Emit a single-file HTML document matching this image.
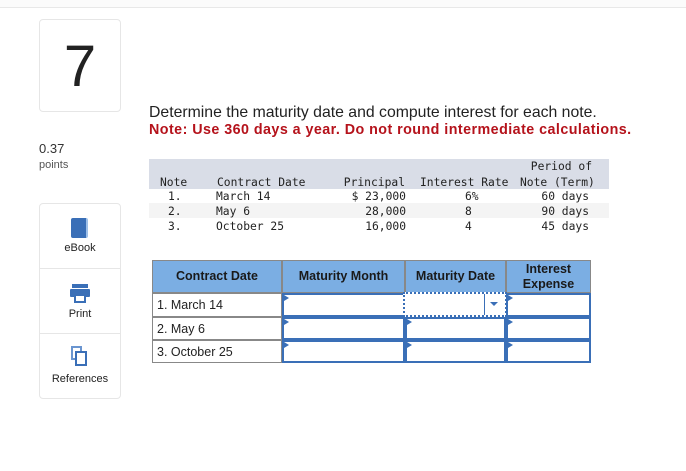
<!DOCTYPE html>
<html><head><meta charset="utf-8"><style>
*{margin:0;padding:0;box-sizing:border-box}
body{width:686px;height:471px;background:#fff;position:relative;overflow:hidden;font-family:"Liberation Sans",sans-serif;color:#222}
.abs{position:absolute}
.m{position:absolute;font-family:"DejaVu Sans Mono","Liberation Mono",monospace;font-size:11.3px;color:#222;white-space:pre;line-height:15px}
.r{text-align:right}
.cell{position:absolute;background:#fff;border:2px solid #3a6fb7}
.cell:before{content:"";position:absolute;left:0;top:0;border-left:5px solid #3a6fb7;border-top:3.5px solid transparent;border-bottom:3.5px solid transparent}
.hd{position:absolute;top:260px;height:33px;background:#7baee3;border:1px solid #888;font-weight:bold;font-size:12.5px;color:#1a1a1a;display:flex;align-items:center;justify-content:center;text-align:center;line-height:15px}
.lab{position:absolute;left:152px;width:130px;background:#fff;border:1px solid #888;font-size:12.5px;padding-left:4px;display:flex;align-items:center}
</style></head><body>
<div class="abs" style="left:0;top:0;width:686px;height:8px;background:#fbfbfb;border-bottom:1px solid #e8e8e8"></div>
<div class="abs" style="left:39px;top:19px;width:82px;height:93px;border:1px solid #e6e6e6;border-radius:4px;text-align:center;font-size:58px;line-height:93px;color:#222">7</div>
<div class="abs" style="left:39px;top:141px;font-size:13px;color:#333">0.37</div>
<div class="abs" style="left:39px;top:159px;font-size:11px;color:#555">points</div>
<div class="abs" style="left:39px;top:203px;width:82px;height:196px;border:1px solid #e6e6e6;border-radius:4px"></div>
<div class="abs" style="left:40px;top:268px;width:80px;height:1px;background:#e6e6e6"></div>
<div class="abs" style="left:40px;top:333px;width:80px;height:1px;background:#e6e6e6"></div>
<div class="abs" style="left:71px;top:218px;width:17px;height:20px;background:#3a6fb7;border-radius:2px;border-right:2px solid #9fc0e8"></div>
<div class="abs" style="left:40px;top:242px;width:80px;text-align:center;font-size:11px">eBook</div>
<div class="abs" style="left:72px;top:284px;width:16px;height:4px;background:#3a6fb7"></div>
<div class="abs" style="left:70px;top:289px;width:20px;height:8px;background:#3a6fb7;border-radius:1px"></div>
<div class="abs" style="left:74px;top:294px;width:12px;height:9px;background:#fff;border:2px solid #3a6fb7"></div>
<div class="abs" style="left:40px;top:308px;width:80px;text-align:center;font-size:11px">Print</div>
<div class="abs" style="left:71px;top:346px;width:11px;height:14px;border:2px solid #6a95d0;background:#fff"></div>
<div class="abs" style="left:75px;top:351px;width:12px;height:15px;border:2px solid #3a6fb7;background:#fff"></div>
<div class="abs" style="left:40px;top:373px;width:80px;text-align:center;font-size:11px">References</div>

<div class="abs" style="left:149px;top:104px;font-size:15.8px;color:#222;white-space:nowrap">Determine the maturity date and compute interest for each note.</div>
<div class="abs" style="left:149px;top:122px;font-size:14.3px;font-weight:bold;color:#b5121b;white-space:nowrap;letter-spacing:0.45px">Note: Use 360 days a year. Do not round intermediate calculations.</div>

<div class="abs" style="left:149px;top:159px;width:460px;height:30px;background:#d9dde7"></div>
<div class="abs" style="left:149px;top:203px;width:460px;height:15px;background:#f4f4f4"></div>
<div class="m r" style="left:500px;width:92px;top:159px">Period of</div>
<div class="m" style="left:160px;top:175px">Note</div>
<div class="m" style="left:217px;top:175px">Contract Date</div>
<div class="m r" style="left:320px;width:85px;top:175px">Principal</div>
<div class="m" style="left:420px;top:175px">Interest Rate</div>
<div class="m" style="left:520px;top:175px">Note (Term)</div>
<div class="m" style="left:168px;top:189px">1.<br>2.<br>3.</div>
<div class="m" style="left:216px;top:189px">March 14<br>May 6<br>October 25</div>
<div class="m r" style="left:320px;width:86px;top:189px">$ 23,000<br>28,000<br>16,000</div>
<div class="m" style="left:465px;top:189px">6%<br>8<br>4</div>
<div class="m r" style="left:520px;width:69px;top:189px">60 days<br>90 days<br>45 days</div>

<div class="hd" style="left:152px;width:130px">Contract Date</div>
<div class="hd" style="left:282px;width:123px">Maturity Month</div>
<div class="hd" style="left:405px;width:101px">Maturity Date</div>
<div class="hd" style="left:506px;width:85px">Interest<br>Expense</div>
<div class="lab" style="top:293px;height:24px">1. March 14</div>
<div class="lab" style="top:317px;height:23px">2. May 6</div>
<div class="lab" style="top:340px;height:23px">3. October 25</div>

<div class="cell" style="left:282px;top:293px;width:123px;height:24px"></div>
<div class="abs" style="left:403px;top:292px;width:104px;height:25px;border:2px dotted #3a6fb7;background:#fff"></div>
<div class="abs" style="left:484px;top:294px;width:1px;height:21px;background:#3a6fb7"></div>
<div class="abs" style="left:490px;top:302px;border-top:4px solid #3a6fb7;border-left:4px solid transparent;border-right:4px solid transparent"></div>
<div class="cell" style="left:506px;top:293px;width:85px;height:24px"></div>

<div class="cell" style="left:282px;top:317px;width:123px;height:23px"></div>
<div class="cell" style="left:405px;top:317px;width:101px;height:23px"></div>
<div class="cell" style="left:506px;top:317px;width:85px;height:23px"></div>
<div class="cell" style="left:282px;top:340px;width:123px;height:23px"></div>
<div class="cell" style="left:405px;top:340px;width:101px;height:23px"></div>
<div class="cell" style="left:506px;top:340px;width:85px;height:23px"></div>
</body></html>
